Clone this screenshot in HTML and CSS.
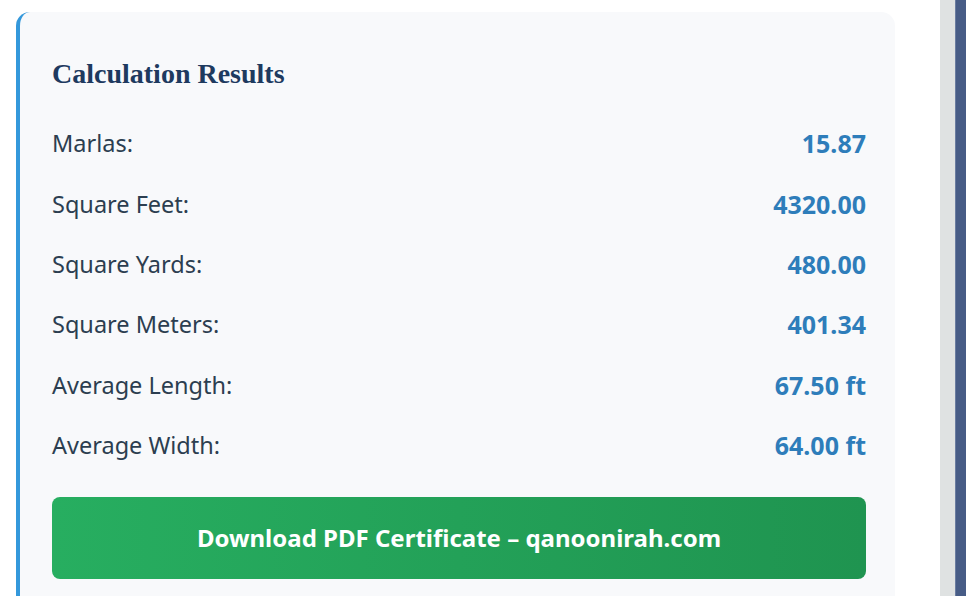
FILE: index.html
```
<!DOCTYPE html>
<html>
<head>
<meta charset="utf-8">
<link rel="stylesheet" href="styles.css">
</head>
<body>
<div class="page">
  <section class="card">
    <h2 class="title">Calculation Results</h2>
    <div class="row"><span class="label">Marlas:</span><span class="value">15.87</span></div>
    <div class="row"><span class="label">Square Feet:</span><span class="value">4320.00</span></div>
    <div class="row"><span class="label">Square Yards:</span><span class="value">480.00</span></div>
    <div class="row"><span class="label">Square Meters:</span><span class="value">401.34</span></div>
    <div class="row"><span class="label">Average Length:</span><span class="value">67.50 ft</span></div>
    <div class="row"><span class="label">Average Width:</span><span class="value">64.00 ft</span></div>
    <button class="download">Download PDF Certificate – qanoonirah.com</button>
  </section>
  <aside class="side">
    <div class="side-gray"></div>
    <div class="side-blue"></div>
  </aside>
</div>
</body>
</html>
```
FILE: styles.css
```
html, body {
  margin: 0;
  padding: 0;
  background: #ffffff;
  height: 100%;
  overflow: hidden;
}
.page {
  display: flex;
  height: 596px;
  overflow: hidden;
}
.card {
  box-sizing: border-box;
  width: 879px;
  margin-top: 12px;
  margin-left: 16px;
  height: 584px;
  background: #f8f9fb;
  border-left: 4px solid #3498db;
  border-radius: 14px 14px 0 0;
  padding: 40px 29px 0 32px;
}
.title {
  margin: 0;
  font-family: "Liberation Serif", serif;
  font-weight: bold;
  font-size: 28px;
  line-height: 44px;
  color: #1e3a5f;
}
.row {
  display: flex;
  justify-content: space-between;
  align-items: center;
  height: 60.4px;
  font-family: "Noto Sans", "Open Sans", sans-serif;
  font-size: 23.5px;
}
.row:first-of-type {
  margin-top: 17px;
}
.label {
  color: #2c3e50;
}
.value {
  color: #2e7dba;
  font-weight: bold;
  font-size: 25px;
}
.download {
  display: block;
  width: 100%;
  height: 82px;
  margin-top: 22px;
  border: none;
  border-radius: 8px;
  background: linear-gradient(90deg, #27ae60, #1f9450);
  color: #ffffff;
  font-family: "Noto Sans", "Open Sans", sans-serif;
  font-weight: bold;
  font-size: 24px;
  padding: 0 0 2px 0;
}
.side {
  margin-left: auto;
  display: flex;
  height: 596px;
}
.side-gray {
  width: 15px;
  background: #dfe2e2;
}
.side-blue {
  width: 10px;
  background: #475c86;
  border-left: 1px solid #6a7ca0;
}
```
